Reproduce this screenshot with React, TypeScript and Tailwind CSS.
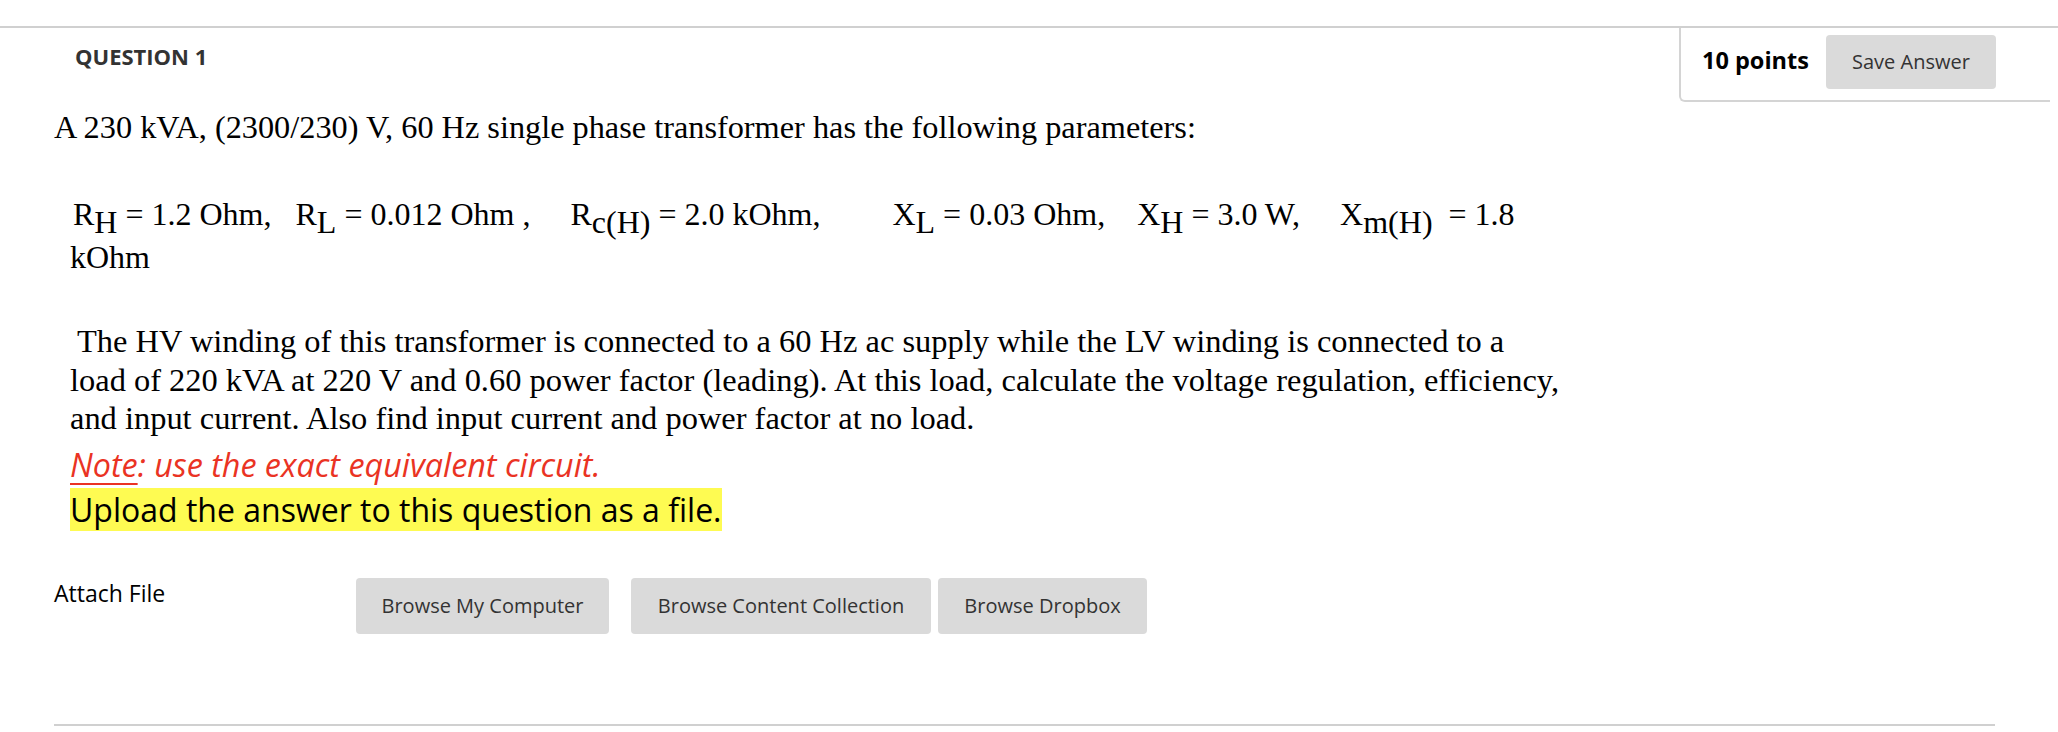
import React from "react";

const serif = "font-['Liberation_Serif','Times_New_Roman',serif]";
const sans = "font-['Open_Sans','Noto_Sans',sans-serif]";

function Sub({ children }: { children: React.ReactNode }) {
  return <span className="align-[-8px] leading-none">{children}</span>;
}

export default function App() {
  return (
    <div className={`w-[2058px] h-[732px] bg-white overflow-hidden text-black ${sans}`}>
      <div className="h-[26px]" />
      <div className="border-t-2 border-[#d0d0d0] flex justify-between items-start">
        <h2 className="pl-[75px] pt-[13px] text-[22px] leading-[30px] font-bold text-[#333]">QUESTION 1</h2>
        <div className="mr-[8px] w-[371px] h-[74px] border-l-2 border-b-2 border-[#d4d4d4] rounded-bl-[6px] flex items-start pl-[21px] pt-[7px] gap-[17px]">
          <span className="mt-[10px] text-[23.5px] leading-[30px] font-bold">10 points</span>
          <button className="w-[170px] h-[54px] bg-[#dadada] rounded-[4px] text-[20px] text-[#333]">Save Answer</button>
        </div>
      </div>

      <div className={`${serif} text-[32.3px] leading-[38px] pl-[54px] mt-[6px]`}>
        <p>A 230 kVA, (2300/230) V, 60 Hz single phase transformer has the following parameters:</p>
      </div>

      <div className="pl-[70px] w-[1560px]">
        <p className={`${serif} text-[32px] leading-[38px] mt-[49px] indent-[3px] whitespace-pre-wrap`}>
          {"R"}<Sub>H</Sub>{" = 1.2 Ohm,   R"}<Sub>L</Sub>{" = 0.012 Ohm ,     R"}<Sub>c(H)</Sub>{" = 2.0 kOhm,         X"}<Sub>L</Sub>{" = 0.03 Ohm,    X"}<Sub>H</Sub>{" = 3.0 W,     X"}<Sub>m(H)</Sub>{"  = 1.8 kOhm"}
        </p>
        <p className={`${serif} text-[32.45px] leading-[38.5px] mt-[46px] whitespace-nowrap`}>
          <span className="pl-[7px]">The HV winding of this transformer is connected to a 60 Hz ac supply while the LV winding is connected to a</span>
          <br />
          load of 220 kVA at 220 V and 0.60 power factor (leading). At this load, calculate the voltage regulation, efficiency,
          <br />
          and input current. Also find input current and power factor at no load.
        </p>
        <p className="text-[32.3px] leading-[40px] italic text-[#ea3323] mt-[6px]">
          <span className="underline underline-offset-[6px] decoration-2">Note</span>: use the exact equivalent circuit.
        </p>
        <p className="text-[32px] leading-[46px] mt-[3px]">
          <span className="bg-[#fefb52]">Upload the answer to this question as a file.</span>
        </p>
      </div>

      <div className="pl-[54px] mt-[45px] flex items-start">
        <span className="w-[302px] text-[23px] leading-[32px] -mt-[1px]">Attach File</span>
        <div className="flex">
          <button className="w-[253px] h-[56px] bg-[#dadada] rounded-[4px] text-[20px] text-[#333]">Browse My Computer</button>
          <button className="ml-[22px] w-[300px] h-[56px] bg-[#dadada] rounded-[4px] text-[20px] text-[#333]">Browse Content Collection</button>
          <button className="ml-[7px] w-[209px] h-[56px] bg-[#dadada] rounded-[4px] text-[20px] text-[#333]">Browse Dropbox</button>
        </div>
      </div>

      <div className="ml-[54px] mr-[63px] mt-[90px] border-t-2 border-[#d0d0d0]" />
    </div>
  );
}
